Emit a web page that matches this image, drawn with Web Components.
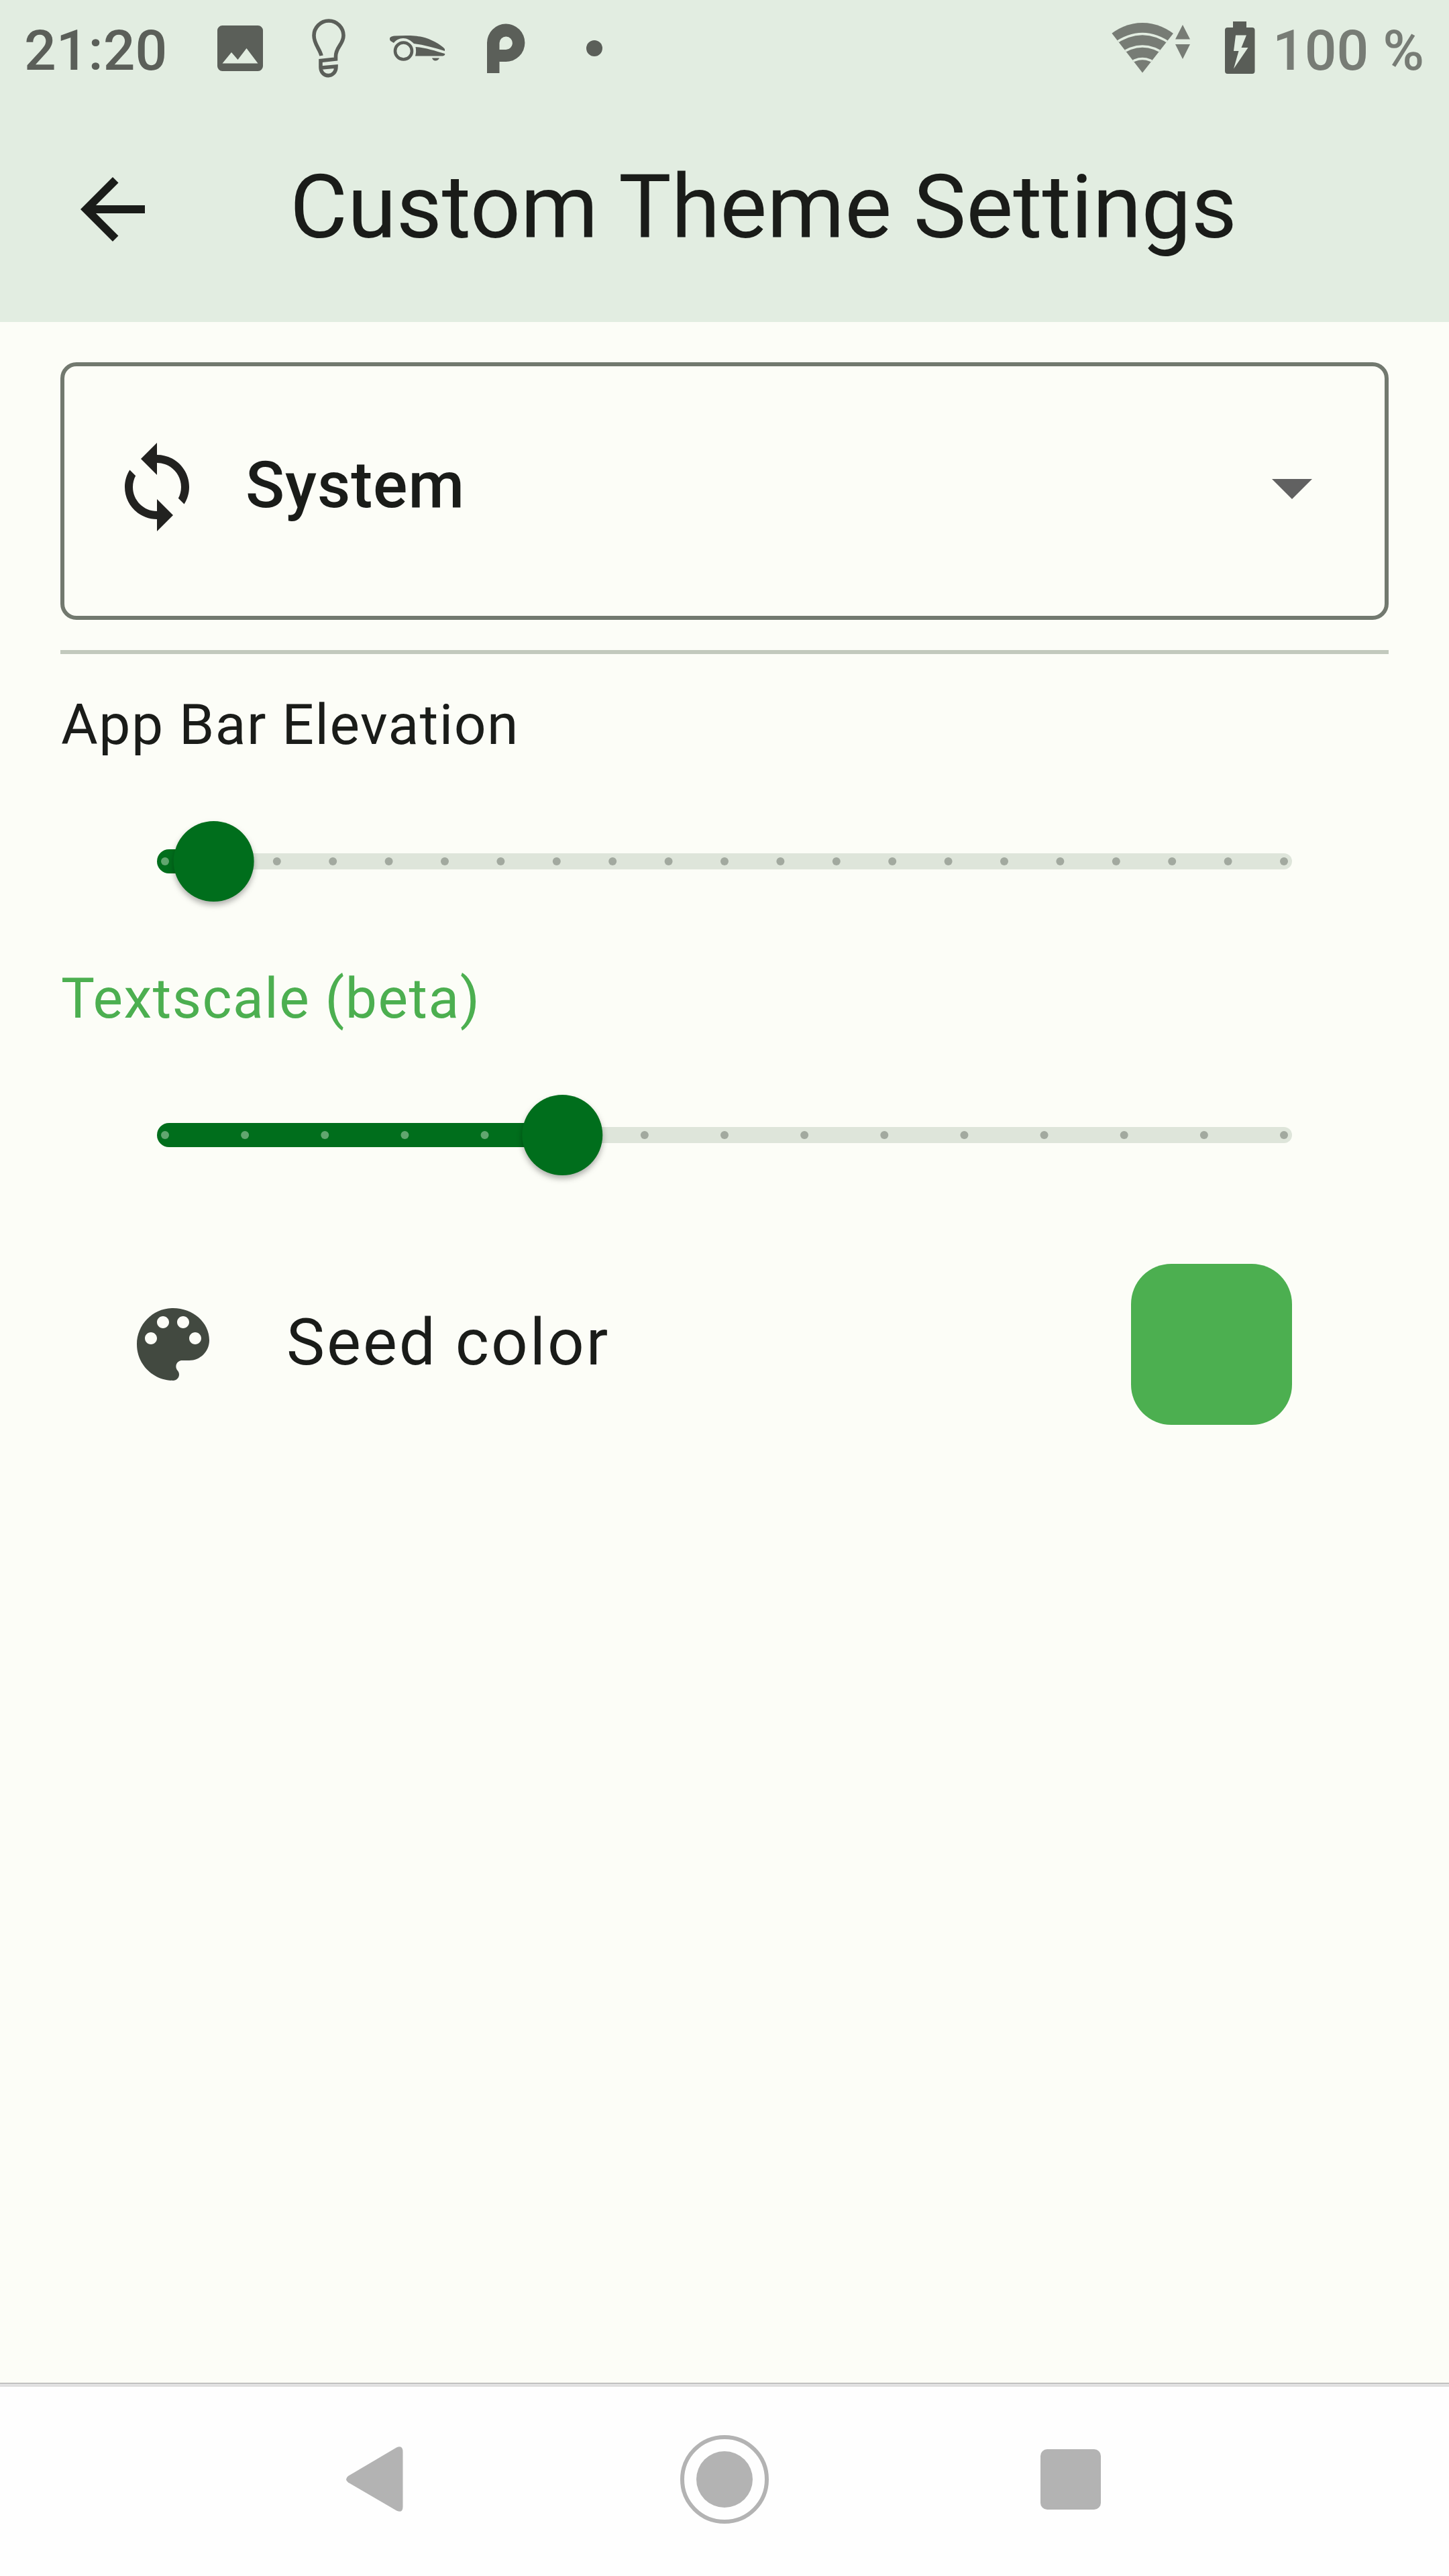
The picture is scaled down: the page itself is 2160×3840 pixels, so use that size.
<!DOCTYPE html>
<html lang="en">
<head>
<meta charset="utf-8">
<title>Custom Theme Settings</title>
<style>
html, body { margin: 0; padding: 0; }
body { width: 2160px; height: 3840px; overflow: hidden; font-family: Roboto, "Noto Sans", sans-serif; background: #fcfdf7; }
</style>
</head>
<body>
<settings-screen></settings-screen>
<script>
function define(name, html, setup) {
  customElements.define(name, class extends HTMLElement {
    constructor() {
      super();
      this.attachShadow({ mode: 'open' }).innerHTML = html;
    }
    connectedCallback() { if (setup) setup(this, this.shadowRoot); }
  });
}

define('status-bar', `
<style>
:host { display: flex; height: 144px; box-sizing: border-box; padding: 0 37px 0 36px; align-items: center; justify-content: space-between; color: #5b5f59; font-size: 84px; font-weight: 500; line-height: 98px; white-space: nowrap; }
.group { display: flex; align-items: center; height: 144px; }
svg { display: block; flex: none; }
span { padding-top: 8px; }
.clock { width: 288px; }
.dim { color: #777c75; }
</style>
<div class="group">
  <span class="clock">21:20</span>
  <svg width="580" height="144" viewBox="324 0 580 144" fill="currentColor">
    <path fill-rule="evenodd" d="M331.500 38H384.500A7.500 7.500 0 0 1 392 45.500V98.500A7.500 7.500 0 0 1 384.500 106H331.500A7.500 7.500 0 0 1 324 98.500V45.500A7.500 7.500 0 0 1 331.500 38ZM331.500 94.500H384.500L367.500 72L354.500 89L345 78Z"/>
    <path fill="none" stroke="currentColor" stroke-width="5.600" d="M479 83C477 73 468 66 468 53A21.800 21.800 0 0 1 512 53C512 66 500.500 70 500.500 84V88L478 90.500V100C478 117 501 117 501 99L479 101"/>
    <circle cx="601.500" cy="76" r="12.500" fill="none" stroke="currentColor" stroke-width="4.600"/>
    <path d="M582 61C579 56 583 54 588 53.500C602 52.500 619 52.500 629 55C642 58 657 66 663 73V76C648 71 632 67 617 65C612 60 607 57 601 57C595 57 590 60 587 64Z"/>
    <path d="M619.500 70C635 71 649 76 663 80C664 82 662 83 660 83.500H619Q621 77 619.500 70Z"/>
    <path d="M644 86.500H655Q653 90.500 649 90.500Q645.500 90.500 644 86.500Z"/>
    <path fill-rule="evenodd" d="M726 109V64A28.200 28.200 0 1 1 754 92H744.500V109ZM744.500 74H754A9.700 9.700 0 1 0 744.500 64Z"/>
    <circle cx="886" cy="72" r="12"/>
  </svg>
</div>
<div class="group">
  <svg width="240" height="144" viewBox="1657 0 240 144" overflow="visible">
    <defs><clipPath id="fan"><path d="M1703 108.500L1656.500 48.500L1656 20H1750V48.500Z"/></clipPath></defs>
    <g clip-path="url(#fan)">
      <circle cx="1703" cy="108" r="74" fill="#777c75"/>
      <g fill="none" stroke="#e2ede1" stroke-width="3.600">
        <path d="M1660 66Q1703 35 1746 66"/>
        <path d="M1668 82Q1703 56 1738 82"/>
        <path d="M1680 97Q1703 78 1726 97"/>
      </g>
    </g>
    <path fill="#777c75" d="M1763 37L1774 58.500H1752ZM1763 88L1774 66H1752Z"/>
    <path fill="#595d57" fill-rule="evenodd" d="M1838 32H1858V41H1866.500A4 4 0 0 1 1870.500 45V106A4 4 0 0 1 1866.500 110H1830A4 4 0 0 1 1826 106V45A4 4 0 0 1 1830 41H1838ZM1842 52.500L1839 76H1846.500L1839 102.500L1860.500 71H1850.500L1858 52.500Z"/>
  </svg>
  <span class="dim">100&nbsp;%</span>
</div>`);

define('app-bar', `
<style>
:host { display: flex; height: 336px; align-items: center; padding-left: 96px; gap: 192px; box-sizing: border-box; }
svg { display: block; width: 144px; height: 144px; flex: none; }
h1 { margin: 0 0 6px; font-weight: 400; font-size: 132px; line-height: 168px; color: #1a1c19; white-space: nowrap; }
</style>
<svg viewBox="0 0 24 24" fill="#1a1c19"><path d="M20 11H7.830l5.590-5.590L12 4l-8 8 8 8 1.410-1.410L7.830 13H20v-2z"/></svg>
<h1><slot></slot></h1>`);

define('select-field', `
<style>
:host { display: flex; box-sizing: border-box; height: 384px; border: 6px solid #72796f; border-radius: 24px; padding: 0 66px 12px; align-items: center; }
svg { display: block; width: 144px; height: 144px; flex: none; }
span { flex: 1; padding: 0 0 6px 60px; font-size: 96px; line-height: 144px; font-weight: 500; letter-spacing: 0.9px; color: #1a1c19; }
</style>
<svg viewBox="0 0 24 24" fill="#222220"><path d="M12 4V1L8 5l4 4V6c3.310 0 6 2.690 6 6 0 1.010-.25 1.970-.7 2.800l1.460 1.460C19.540 15.030 20 13.570 20 12c0-4.420-3.580-8-8-8zm0 14c-3.310 0-6-2.690-6-6 0-1.010.25-1.970.7-2.800L5.240 7.740C4.460 8.970 4 10.430 4 12c0 4.420 3.580 8 8 8v3l4-4-4-4v3z"/></svg>
<span><slot></slot></span>
<svg viewBox="0 0 24 24" fill="#616161"><path d="M7 10l5 5 5-5z"/></svg>`);

define('section-label', `
<style>
:host { display: block; box-sizing: border-box; height: 120px; padding: 1px 0 0 1px; font-size: 84px; line-height: 120px; letter-spacing: 1.5px; color: var(--label, #1a1c19); white-space: nowrap; }
</style><slot></slot>`);

define('discrete-slider', `
<style>
:host { display: block; height: 288px; }
svg { display: block; width: 1980px; height: 288px; overflow: visible; }
circle.thumb { filter: drop-shadow(0 5px 4px rgba(0,0,0,.3)); }
</style>
<svg viewBox="90 0 1980 288"></svg>`, (host, root) => {
  const steps = +host.getAttribute('steps'), value = +host.getAttribute('value');
  const thumb = 234 + 1692 * value / steps;
  let out = `<rect x="${thumb - 12}" y="132" width="${1926 - thumb + 12}" height="24" rx="12" fill="#dee5da"/>
    <rect x="234" y="126" width="${thumb - 234}" height="36" rx="18" fill="#006e1c"/>`;
  for (let i = 0; i <= steps; i++) {
    const x = 246 + 1668 * i / steps;
    out += `<circle cx="${x}" cy="144" r="6" fill="${x < thumb ? '#61a66f' : '#a2a99f'}"/>`;
  }
  out += `<circle class="thumb" cx="${thumb}" cy="144" r="60" fill="#006e1c"/>`;
  root.querySelector('svg').innerHTML = out;
});

define('color-tile', `
<style>
:host { display: flex; height: 288px; align-items: center; padding: 0 144px 0 96px; box-sizing: border-box; }
svg { display: block; width: 144px; height: 144px; flex: none; }
span { flex: 1; padding: 0 0 6px 97px; font-size: 96px; line-height: 144px; letter-spacing: 3px; color: #1a1c19; }
i { display: block; width: 240px; height: 240px; border-radius: 60px; background: #4caf50; }
</style>
<svg viewBox="0 0 24 24" fill="#424940"><path d="M12 3c-4.970 0-9 4.030-9 9s4.030 9 9 9c.83 0 1.500-.67 1.500-1.500 0-.39-.15-.74-.39-1.010-.23-.26-.38-.61-.38-.99 0-.83.67-1.500 1.500-1.500H16c2.760 0 5-2.240 5-5 0-4.420-4.030-8-9-8zm-5.500 9c-.83 0-1.500-.67-1.500-1.500S5.670 9 6.500 9 8 9.670 8 10.500 7.330 12 6.500 12zm3-4C8.670 8 8 7.330 8 6.500S8.670 5 9.500 5s1.500.67 1.500 1.500S10.330 8 9.500 8zm5 0c-.83 0-1.500-.67-1.500-1.500S13.670 5 14.500 5s1.500.67 1.500 1.500S15.330 8 14.500 8zm3 4c-.83 0-1.500-.67-1.500-1.500S16.670 9 17.500 9s1.500.67 1.500 1.500-.67 1.500-1.500 1.500z"/></svg>
<span><slot></slot></span>
<i></i>`);

define('nav-bar', `
<style>
:host { display: flex; justify-content: center; height: 288px; box-sizing: border-box; background: #fefefe; border-top: 1px solid #a2a2a2; box-shadow: inset 0 5px #e0e0e0; }
svg { display: block; width: 1200px; height: 287px; }
</style>
<svg viewBox="480 3553 1200 287" fill="#b3b3b3">
  <path d="M519 3691L591 3648.500Q600.500 3644 600.500 3655V3736.500Q600.500 3747 591 3742.500L519 3700.500Q513 3696 519 3691Z"/>
  <circle cx="1080" cy="3696" r="63" fill="none" stroke="#b3b3b3" stroke-width="6"/>
  <circle cx="1080" cy="3696" r="42"/>
  <rect x="1551" y="3651" width="90" height="90" rx="10"/>
</svg>`);

define('settings-screen', `
<style>
:host { display: flex; flex-direction: column; width: 2160px; height: 3840px; background: #fcfdf7; }
header { background: #e2ede1; height: 480px; }
main { flex: 1; display: flex; flex-direction: column; padding: 60px 90px 0; }
hr { margin: 45px 0 0; width: 100%; height: 6px; border: 0; background: #c2c9bd; }
.a { margin-top: 45px; }
section-label.b { --label: #4caf50; }
color-tile { margin-top: 24px; }
</style>
<header><status-bar></status-bar><app-bar>Custom Theme Settings</app-bar></header>
<main>
  <select-field>System</select-field>
  <hr>
  <section-label class="a">App Bar Elevation</section-label>
  <discrete-slider steps="20" value="1"></discrete-slider>
  <section-label class="b">Textscale (beta)</section-label>
  <discrete-slider steps="14" value="5"></discrete-slider>
  <color-tile>Seed color</color-tile>
</main>
<nav-bar></nav-bar>`);
</script>
</body>
</html>
